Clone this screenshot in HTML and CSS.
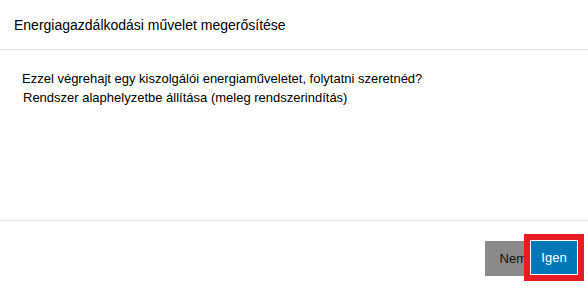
FILE: index.html
```html
<!DOCTYPE html>
<html lang="hu">
<head>
<meta charset="utf-8">
<link rel="stylesheet" href="styles.css">
</head>
<body>
<div class="dialog">
  <div class="dialog-header">
    <h1 class="dialog-title">Energiagazdálkodási művelet megerősítése</h1>
  </div>
  <div class="dialog-body">
    <p class="msg">Ezzel végrehajt egy kiszolgálói energiaműveletet, folytatni szeretnéd?</p>
    <p class="msg msg-detail">Rendszer alaphelyzetbe állítása (meleg rendszerindítás)</p>
  </div>
  <div class="dialog-footer">
    <button class="btn btn-secondary">Nem</button>
    <button class="btn btn-primary btn-focused">Igen</button>
  </div>
</div>
</body>
</html>
```
FILE: styles.css
```css
html, body {
  margin: 0;
  padding: 0;
  background: #ffffff;
}
body {
  font-family: "Liberation Sans", Arial, sans-serif;
  color: #000000;
  width: 588px;
  height: 286px;
  overflow: hidden;
}
.dialog {
  display: flex;
  flex-direction: column;
  height: 286px;
}
.dialog-header {
  height: 50px;
  box-sizing: border-box;
  border-bottom: 1px solid #e5e5e5;
  display: flex;
  align-items: center;
  padding: 0 14px;
}
.dialog-title {
  margin: 0;
  font-size: 14px;
  font-weight: normal;
  line-height: 20px;
}
.dialog-body {
  height: 171px;
  box-sizing: border-box;
  padding: 19px 22px 0;
  border-bottom: 1px solid #e5e5e5;
}
.msg {
  margin: 0;
  font-size: 13px;
  line-height: 19px;
}
.msg-detail {
  padding-left: 1px;
}
.dialog-footer {
  display: flex;
  justify-content: flex-end;
  align-items: flex-start;
  padding: 20px 10px 0 0;
}
.btn {
  font-family: inherit;
  font-size: 13px;
  border: none;
  margin: 0;
  height: 35px;
  padding: 0;
  cursor: pointer;
}
.btn-secondary {
  background: #8a8a8a;
  color: #111111;
  width: 45px;
  text-align: right;
  padding-right: 3px;
}
.btn-primary {
  background: #0078b7;
  color: #ffffff;
  border: 1px solid #ffffff;
  width: 48px;
  margin-top: -1px;
}
.btn-focused {
  outline: 6px solid #e81c24;
  position: relative;
}
```
